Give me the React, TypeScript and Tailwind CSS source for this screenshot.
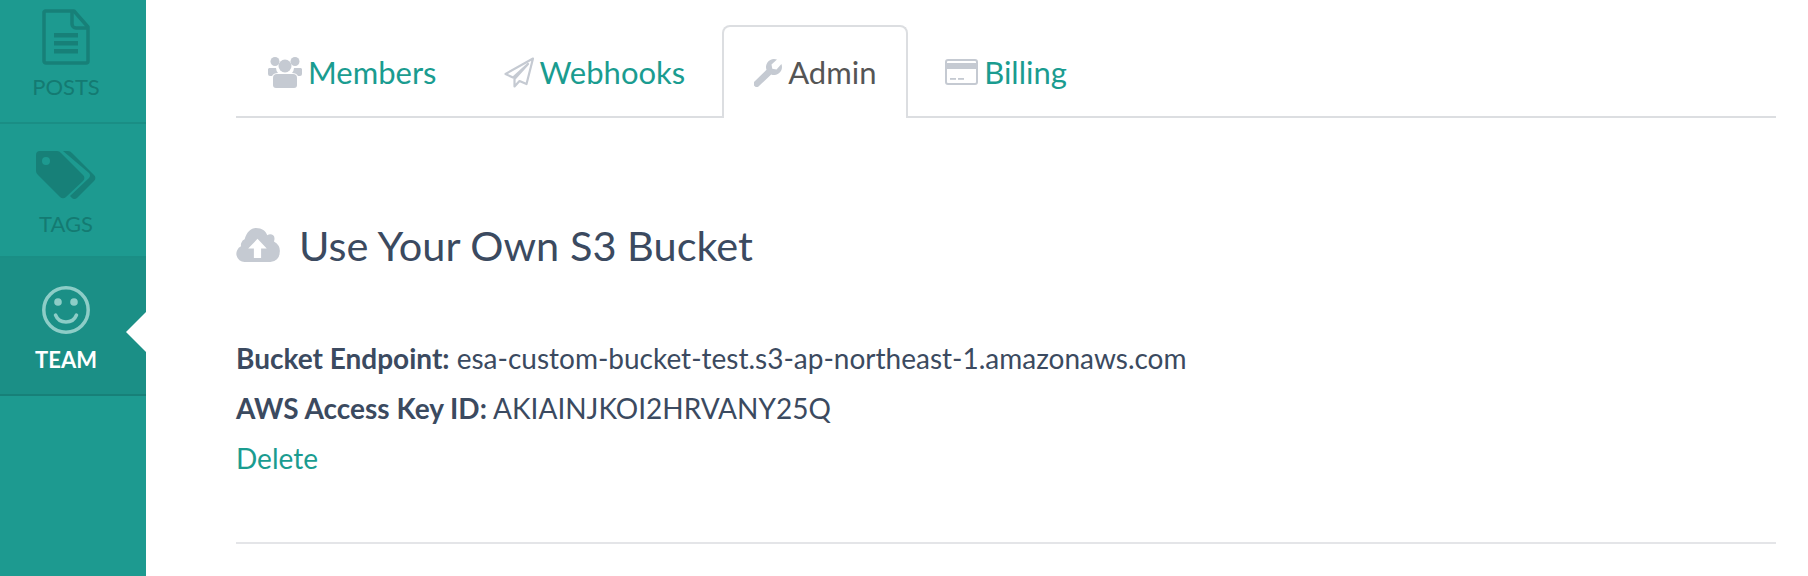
import React from "react";

const PostsIcon = () => (
  <svg width="48" height="56" viewBox="0 0 48 56" className="block">
    <path d="M3 2h29l14 16v34a2 2 0 0 1-2 2H4a2 2 0 0 1-2-2V3z" fill="none" stroke="#178078" strokeWidth="3.5" strokeLinejoin="round" />
    <path d="M30 2v13a4 4 0 0 0 4 4h12" fill="none" stroke="#178078" strokeWidth="3.5" />
    <rect x="12" y="24" width="24" height="4.5" fill="#178078" />
    <rect x="12" y="32" width="24" height="4.5" fill="#178078" />
    <rect x="12" y="40" width="24" height="4.5" fill="#178078" />
  </svg>
);

const TagsIcon = () => (
  <svg width="60" height="48" viewBox="0 0 60 48" className="block">
    <path d="M4 0h17a5 5 0 0 1 4 2l22 22a4 4 0 0 1 0 6L30 46a4 4 0 0 1-6 0L2 24a5 5 0 0 1-2-4V4a4 4 0 0 1 4-4z" fill="#178078" fillRule="evenodd" />
    <circle cx="10" cy="10" r="4" fill="#1d9a90" />
    <path d="M27 0h5a6 6 0 0 1 4 2l22 22a4 4 0 0 1 0 6L41 47a4 4 0 0 1-6-1l-1-1 19-18a4 4 0 0 0 0-5z" fill="#178078" />
  </svg>
);

const SmileIcon = () => (
  <svg width="48" height="48" viewBox="0 0 48 48" className="block">
    <circle cx="24" cy="24" r="22.2" fill="none" stroke="#8dcdc7" strokeWidth="3.5" />
    <circle cx="16" cy="16" r="3.8" fill="#8dcdc7" />
    <circle cx="32" cy="16" r="3.8" fill="#8dcdc7" />
    <path d="M13.5 29c2 5 6 7 10.500 7s8.500-2 10.500-7" fill="none" stroke="#8dcdc7" strokeWidth="3.500" strokeLinecap="round" />
  </svg>
);

const MembersIcon = () => (
  <svg width="34" height="31" viewBox="0 0 34 31" fill="#c5cad2" className="block">
    <circle cx="7" cy="4.500" r="4.500" />
    <circle cx="27" cy="4.500" r="4.500" />
    <circle cx="17" cy="9" r="6.500" />
    <path d="M1 11h7a8 8 0 0 0 2 5c-3 0-5 1-6 3H2a2 2 0 0 1-2-2v-5z" />
    <path d="M33 11h-7a8 8 0 0 1-2 5c3 0 5 1 6 3h2a2 2 0 0 0 2-2v-5z" />
    <path d="M9 17h16a4 4 0 0 1 4 4v7a3 3 0 0 1-3 3H8a3 3 0 0 1-3-3v-7a4 4 0 0 1 4-4z" />
  </svg>
);

const PlaneIcon = () => (
  <svg width="30" height="31" viewBox="0 0 30 31" fill="none" stroke="#c5cad2" strokeWidth="2.200" strokeLinejoin="round" className="block">
    <path d="M29 1.500 1.500 17l7.500 3.500L24 7 10.500 22v7.500l5-5.500 7 3z" />
  </svg>
);

const WrenchIcon = () => (
  <svg width="28" height="28" viewBox="0 0 28 28" fill="#c5cad2" className="block">
    <path d="M20 0c1 0 2 .2 3 .6L17.500 5.500l.8 4.200 4.200.8L27.400 5c.4 1 .6 2 .6 3a8 8 0 0 1-10.800 7.500L5 27a3.200 3.200 0 0 1-4.500 0 3.200 3.200 0 0 1 0-4.500L12.500 10.800A8 8 0 0 1 20 0z" />
  </svg>
);

const CardIcon = () => (
  <svg width="33" height="26" viewBox="0 0 33 26" className="block">
    <rect x="1" y="1" width="31" height="24" rx="2" fill="none" stroke="#c5cad2" strokeWidth="2" />
    <rect x="1" y="4" width="31" height="6" fill="#c5cad2" />
    <rect x="5" y="19" width="6" height="1.800" fill="#c5cad2" />
    <rect x="13" y="19" width="6" height="1.800" fill="#c5cad2" />
  </svg>
);

const CloudIcon = () => (
  <svg width="44" height="34" viewBox="0 0 42 33" className="block">
    <path d="M8 33a8 8 0 0 1-3.500-15.200C4.500 17 4 16 5 14a5 5 0 0 1 3-3C10 4 14 0 19 0c6 0 9.500 3 11 7 3-2 7-.5 7 3 0 1 0 2-.5 3A10 10 0 0 1 42 24a9 9 0 0 1-9 9z" fill="#c5cad2" />
    <path d="M20.500 10.500 29.500 20h-5.500v9h-7v-9h-5.500z" fill="#fff" />
  </svg>
);

const SideItem = ({ icon, label, active, className }: { icon: React.ReactNode; label: string; active?: boolean; className: string }) => (
  <div className={`relative flex flex-col items-center pr-[14px] ${active ? "bg-[#1b8f86] border-[#178078]" : "border-[#1a8e85]"} border-b-2 ${className}`}>
    {icon}
    <span className={`text-[22px] leading-[26px] ${active ? "font-bold text-white" : "text-[#147a72]"}`}>{label}</span>
    {active && (
      <span className="absolute right-0 top-[54px] w-0 h-0 border-y-[20px] border-y-transparent border-r-[20px] border-r-white" />
    )}
  </div>
);

const Tab = ({ icon, label, active, className }: { icon: React.ReactNode; label: string; active?: boolean; className?: string }) => (
  <a className={`flex items-center gap-[6px] ${active ? "border-2 border-b-0 border-[#dcdee1] rounded-t-[8px] bg-white text-[#555555] -mb-[2px] h-[93px]" : "h-[91px] text-[#1a9c90]"} ${className ?? ""}`}>
    {icon}
    <span>{label}</span>
  </a>
);

export default function App() {
  return (
    <div className="flex w-[1808px] h-[576px] overflow-hidden bg-white font-['Lato',sans-serif] text-[#3b4a60]">
      <aside className="w-[146px] shrink-0 bg-[#1d9a90] flex flex-col">
        <SideItem icon={<PostsIcon />} label="POSTS" className="h-[124px] pt-[9px] gap-[9px]" />
        <SideItem icon={<TagsIcon />} label="TAGS" className="h-[134px] pt-[27px] gap-[12px]" />
        <SideItem icon={<SmileIcon />} label="TEAM" active className="h-[138px] pt-[28px] gap-[13px]" />
      </aside>
      <main className="flex-1 pl-[90px] pr-[32px]">
        <nav className="flex items-center h-[118px] pt-[28px] border-b-2 border-[#dcdee1] text-[31px] leading-none">
          <Tab icon={<MembersIcon />} label="Members" className="ml-[32px]" />
          <Tab icon={<PlaneIcon />} label="Webhooks" className="ml-[67px]" />
          <Tab icon={<WrenchIcon />} label="Admin" active className="ml-[37px] w-[186px] pl-[30px] self-end" />
          <Tab icon={<CardIcon />} label="Billing" className="ml-[37px]" />
        </nav>
        <h2 className="flex items-center gap-[19px] mt-[102px] text-[41.5px] leading-[50px]">
          <CloudIcon />
          Use Your Own S3 Bucket
        </h2>
        <div className="mt-[63px] text-[28px] leading-[50px]">
          <p><strong className="font-bold">Bucket Endpoint:</strong> esa-custom-bucket-test.s3-ap-northeast-1.amazonaws.com</p>
          <p><strong className="font-bold">AWS Access Key ID:</strong> AKIAINJKOI2HRVANY25Q</p>
          <a className="block text-[#1a9c90]">Delete</a>
        </div>
        <hr className="mt-[59px] border-t-2 border-[#e4e5e8]" />
      </main>
    </div>
  );
}
